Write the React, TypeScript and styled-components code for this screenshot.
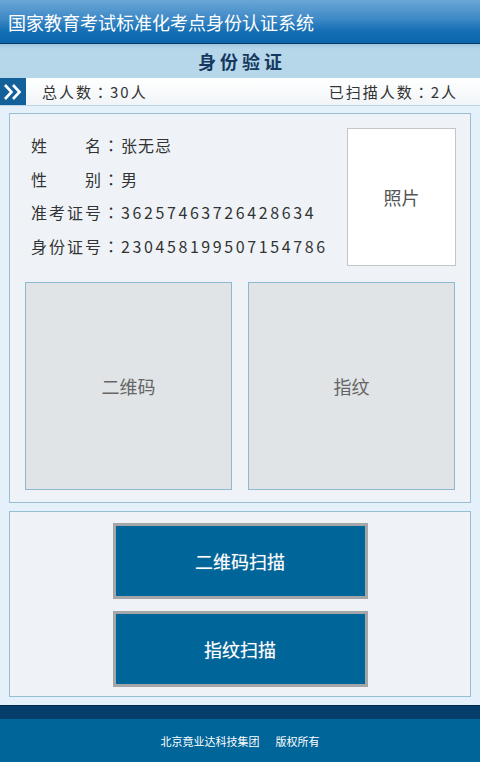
import React from 'react';
import styled, { createGlobalStyle } from 'styled-components';

const GlobalStyle = createGlobalStyle`
  html, body {
    margin: 0;
    padding: 0;
    background: #e4f1fb;
    font-family: "Noto Sans CJK SC", "Noto Sans", sans-serif;
  }
`;

const Page = styled.div`
  width: 480px;
  height: 762px;
  display: flex;
  flex-direction: column;
  background: #e4f1fb;

  & > * {
    flex-shrink: 0;
  }
`;

const TopBar = styled.div`
  height: 43px;
  border-bottom: 1px solid #08365e;
  background: linear-gradient(#6aa7d6 0%, #3d88c6 45%, #1770b5 70%, #0b66ad 100%);
  display: flex;
  align-items: center;
  padding-left: 8px;
  color: #fff;
  font-size: 18px;
`;

const SubTitle = styled.div`
  height: 34px;
  background: linear-gradient(#9fc6df 0px, #b6d6ea 5px, #b6d6ea 100%);
  display: flex;
  align-items: center;
  justify-content: center;
  color: #15395e;
  font-size: 18px;
  font-weight: 700;
  letter-spacing: 4px;
  padding-left: 4px;
`;

const StatsBar = styled.div`
  height: 27px;
  display: flex;
  align-items: center;
  background: linear-gradient(#ffffff, #f1f5f8);
  border-bottom: 1px solid #b9d4e4;
  color: #333;
  font-size: 15px;
  letter-spacing: 2px;
`;

const Arrow = styled.div`
  width: 26px;
  height: 100%;
  background: #14609a;
  display: flex;
  align-items: center;
  justify-content: center;
  margin-right: 16px;
`;

const StatRight = styled.span`
  margin-left: auto;
  margin-right: 22px;
`;

// centred full-width colon, as the traditional-style glyph draws it
const Colon = styled.span`
  font-family: "Noto Sans CJK TC", "Noto Sans CJK SC", sans-serif;
`;

const Main = styled.div`
  display: flex;
  flex-direction: column;
  gap: 8px;
  padding: 7px 9px 8px;
`;

const Card = styled.div`
  background: #eff3f7;
  border: 1px solid #96bfd4;
  box-sizing: border-box;
`;

const InfoCard = styled(Card)`
  height: 390px;
  padding: 14px 14px 0 15px;
`;

const InfoTop = styled.div`
  display: flex;
  justify-content: space-between;
  padding-left: 6px;
`;

const Lines = styled.div`
  display: flex;
  flex-direction: column;
`;

const Line = styled.div`
  display: flex;
  align-items: center;
  height: 33.7px;
  font-size: 16px;
  color: #333;
`;

const Label = styled.span`
  width: 70px;
  display: flex;
  justify-content: space-between;
`;

const InfoColon = styled(Colon)`
  width: 20px;
  text-align: center;
`;

const Value = styled.span<{ $digits?: boolean }>`
  letter-spacing: ${(p) => (p.$digits ? '2.6px' : '1px')};
`;

const Photo = styled.div`
  width: 109px;
  height: 138px;
  box-sizing: border-box;
  background: #fff;
  border: 1px solid #c3c6c9;
  display: flex;
  align-items: center;
  justify-content: center;
  color: #555;
  font-size: 18px;
`;

const Scans = styled.div`
  display: grid;
  grid-template-columns: 1fr 1fr;
  gap: 16px;
  margin-top: 16px;
  margin-right: 1px;
`;

const ScanBox = styled.div`
  height: 208px;
  box-sizing: border-box;
  background: #e0e4e7;
  border: 1px solid #8cb9d1;
  display: flex;
  align-items: center;
  justify-content: center;
  color: #666;
  font-size: 18px;
`;

const ActionCard = styled(Card)`
  height: 186px;
  display: flex;
  flex-direction: column;
  align-items: center;
  gap: 12px;
  padding-top: 11px;
`;

const ActionButton = styled.button`
  width: 255px;
  height: 76px;
  box-sizing: border-box;
  background: #006599;
  border: 3px solid #a4a6a8;
  color: #fff;
  font-family: inherit;
  font-size: 18px;
  text-shadow: 0 0 1px #7fa9c4;
  cursor: pointer;
`;

const Footer = styled.div`
  display: flex;
  flex-direction: column;
`;

const FooterBand = styled.div`
  height: 13px;
  background: #053d6b;
  border-top: 1px solid #022a4a;
`;

const FooterBody = styled.div`
  height: 43px;
  background: #006599;
  display: flex;
  align-items: center;
  justify-content: center;
  gap: 16px;
  color: #fff;
  font-size: 11px;
`;

const ChevronIcon = () => (
  <svg width="20" height="18" viewBox="0 0 20 18">
    <path d="M2 2 L8.5 9 L2 16" fill="none" stroke="#fff" strokeWidth="2.6" />
    <path d="M10 2 L16.5 9 L10 16" fill="none" stroke="#fff" strokeWidth="2.6" />
  </svg>
);

const info = [
  { label: ['姓', '名'], value: '张无忌', digits: false },
  { label: ['性', '别'], value: '男', digits: false },
  { label: ['准', '考', '证', '号'], value: '36257463726428634', digits: true },
  { label: ['身', '份', '证', '号'], value: '230458199507154786', digits: true },
];

export default function App() {
  return (
    <Page>
      <GlobalStyle />
      <TopBar>国家教育考试标准化考点身份认证系统</TopBar>
      <SubTitle>身份验证</SubTitle>
      <StatsBar>
        <Arrow>
          <ChevronIcon />
        </Arrow>
        <span>
          总人数<Colon>：</Colon>30人
        </span>
        <StatRight>
          已扫描人数<Colon>：</Colon>2人
        </StatRight>
      </StatsBar>
      <Main>
        <InfoCard>
          <InfoTop>
            <Lines>
              {info.map((row) => (
                <Line key={row.value}>
                  <Label>
                    {row.label.map((c) => (
                      <span key={c}>{c}</span>
                    ))}
                  </Label>
                  <InfoColon>：</InfoColon>
                  <Value $digits={row.digits}>{row.value}</Value>
                </Line>
              ))}
            </Lines>
            <Photo>照片</Photo>
          </InfoTop>
          <Scans>
            <ScanBox>二维码</ScanBox>
            <ScanBox>指纹</ScanBox>
          </Scans>
        </InfoCard>
        <ActionCard>
          <ActionButton>二维码扫描</ActionButton>
          <ActionButton>指纹扫描</ActionButton>
        </ActionCard>
      </Main>
      <Footer>
        <FooterBand />
        <FooterBody>
          <span>北京竟业达科技集团</span>
          <span>版权所有</span>
        </FooterBody>
      </Footer>
    </Page>
  );
}
